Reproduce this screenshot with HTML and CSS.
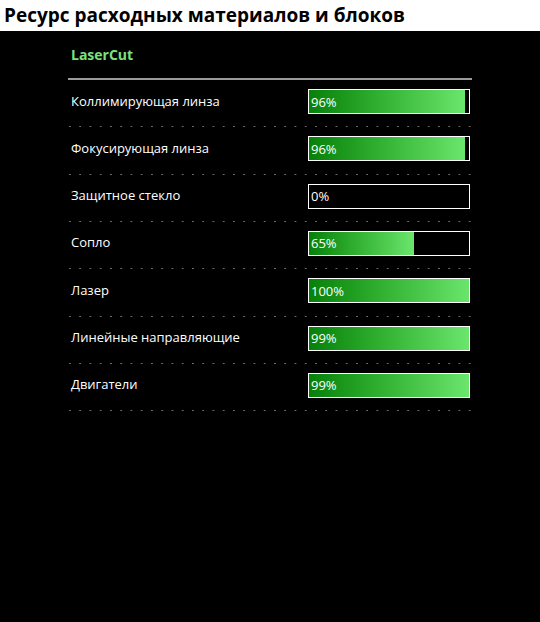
FILE: index.html
```html
<!DOCTYPE html>
<html lang="ru">
<head>
<meta charset="utf-8">
<link rel="stylesheet" href="styles.css">
</head>
<body>
<header class="page-head">
  <h1 class="page-title">Ресурс расходных материалов и блоков</h1>
</header>
<main class="panel">
  <div class="machine">LaserCut</div>
  <div class="rows">
    <div class="row"><span class="label">Коллимирующая линза</span><div class="bar"><div class="fill" style="width:96%"></div><span class="pct">96%</span></div></div>
    <div class="row"><span class="label">Фокусирующая линза</span><div class="bar"><div class="fill" style="width:96%"></div><span class="pct">96%</span></div></div>
    <div class="row"><span class="label">Защитное стекло</span><div class="bar"><div class="fill" style="width:0%"></div><span class="pct">0%</span></div></div>
    <div class="row"><span class="label">Сопло</span><div class="bar"><div class="fill" style="width:65%"></div><span class="pct">65%</span></div></div>
    <div class="row"><span class="label">Лазер</span><div class="bar"><div class="fill" style="width:100%"></div><span class="pct">100%</span></div></div>
    <div class="row"><span class="label">Линейные направляющие</span><div class="bar"><div class="fill" style="width:99%"></div><span class="pct">99%</span></div></div>
    <div class="row"><span class="label">Двигатели</span><div class="bar"><div class="fill" style="width:99%"></div><span class="pct">99%</span></div></div>
  </div>
</main>
</body>
</html>
```
FILE: styles.css
```css
html, body {
  margin: 0;
  padding: 0;
  background: #000;
  height: 100%;
}
body {
  font-family: "Open Sans", "Noto Sans", sans-serif;
  color: #fff;
}
.page-head {
  background: #fff;
  height: 31px;
  display: flex;
  align-items: center;
  padding-left: 4px;
}
.page-title {
  margin: 0;
  font-size: 19px;
  font-weight: 700;
  color: #000;
  line-height: 1;
}
.panel {
  width: 404px;
  margin: 0 auto;
}
.machine {
  color: #7de07d;
  font-weight: 700;
  font-size: 14px;
  padding: 14px 0 0 3px;
  box-sizing: border-box;
  border-bottom: 2px solid #9a9a9a;
  height: 49px;
}
.row {
  display: grid;
  grid-template-columns: 1fr 162px;
  align-items: center;
  padding: 9px 2px 13.33px 0;
  background: linear-gradient(to right, #6e6e6e 0 2px, transparent 2px) repeat-x 1px bottom / 10.26px 1px;
}
.label {
  font-size: 13px;
  padding-left: 3px;
  position: relative;
  top: -1px;
}
.bar {
  position: relative;
  height: 25px;
  background: #000;
}
.bar::after {
  content: "";
  position: absolute;
  inset: 0;
  border: 1px solid #fff;
}
.fill {
  height: 24px;
  margin: 1px 0 0 1px;
  max-width: 161px;
  background: linear-gradient(to right, #07800a, #2cab2c 40%, #6ae66c);
}
.pct {
  position: absolute;
  left: 3px;
  top: 0;
  bottom: 0;
  display: flex;
  align-items: center;
  font-size: 13px;
  z-index: 1;
}
```
